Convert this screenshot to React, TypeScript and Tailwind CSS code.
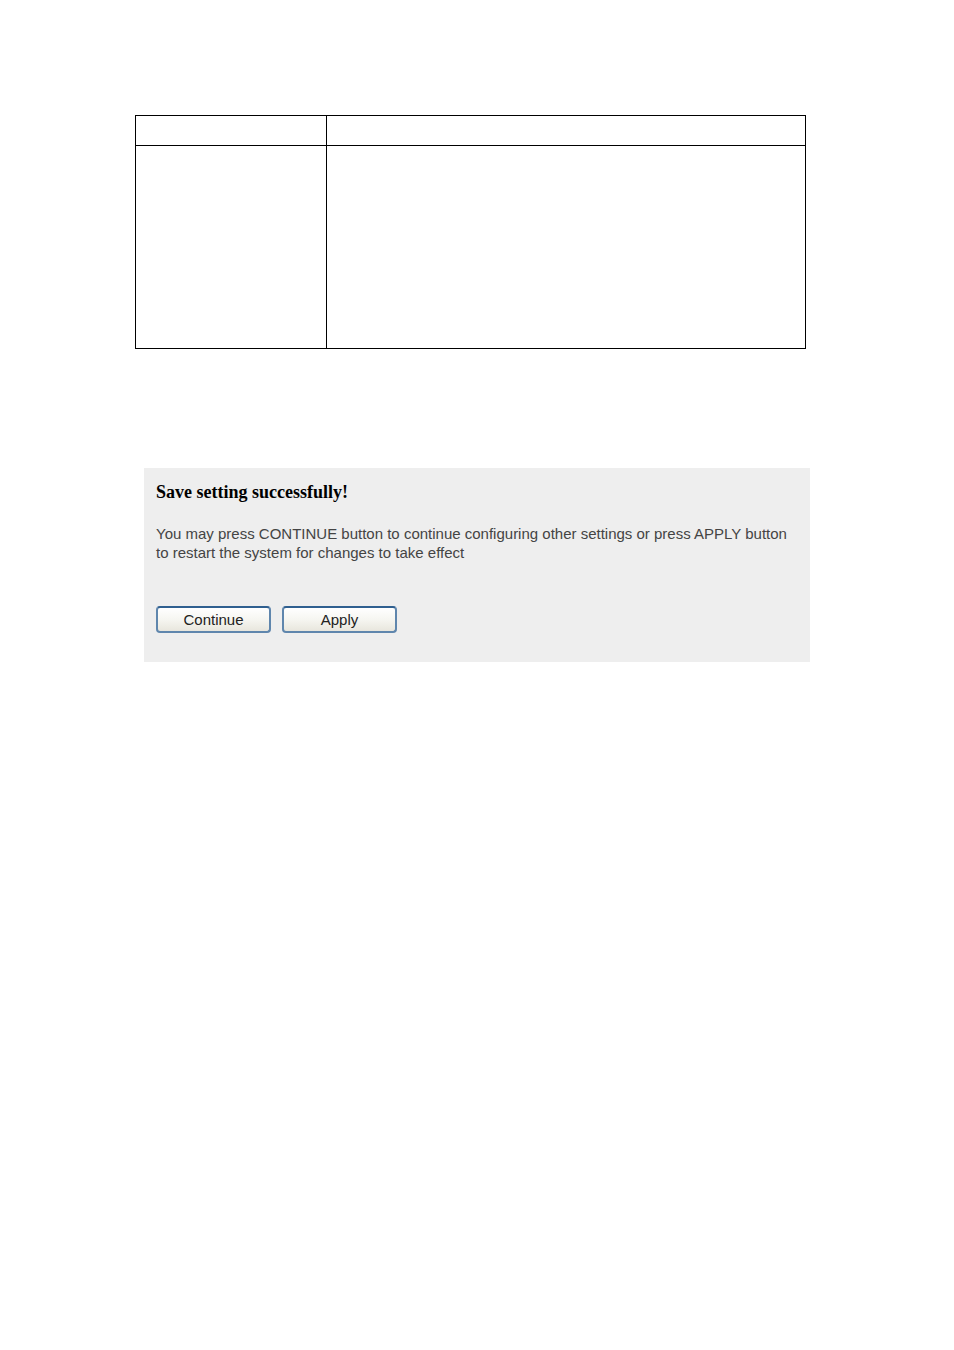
const buttons = ["Continue", "Apply"];

function SettingsTable() {
  return (
    <table className="w-full table-fixed border-collapse border border-black">
      <colgroup>
        <col className="w-[191px]" />
        <col />
      </colgroup>
      <tbody>
        <tr className="h-[30px]">
          <td className="border border-black" />
          <td className="border border-black" />
        </tr>
        <tr className="h-[203px]">
          <td className="border border-black" />
          <td className="border border-black" />
        </tr>
      </tbody>
    </table>
  );
}

export default function App() {
  return (
    <main className="min-h-screen bg-white pt-[115px]">
      <div className="pl-[135px] pr-[148px]">
        <SettingsTable />
      </div>

      <section className="mx-36 mt-[119px] bg-[#eeeeee] px-3 pt-3 pb-[29px]">
        <h1 className="font-['Liberation_Serif',serif] text-[18px] leading-6 font-bold text-black">
          Save setting successfully!
        </h1>
        <p className="mt-5 font-['Liberation_Sans',sans-serif] text-[15px] leading-[19px] text-[#444444]">
          You may press CONTINUE button to continue configuring other settings or press APPLY button to restart the
          system for changes to take effect
        </p>
        <div className="mt-11 flex gap-[11px]">
          {buttons.map((label) => (
            <button
              key={label}
              type="button"
              className="h-[27px] w-[115px] rounded-[4px] border-2 border-[#5f86ad] border-t-[#2f5f8f] bg-linear-to-b from-white via-[#f6f6f1] to-[#e8e6dd] font-['Liberation_Sans',sans-serif] text-[15px] leading-5 text-[#222222]"
            >
              {label}
            </button>
          ))}
        </div>
      </section>
    </main>
  );
}
